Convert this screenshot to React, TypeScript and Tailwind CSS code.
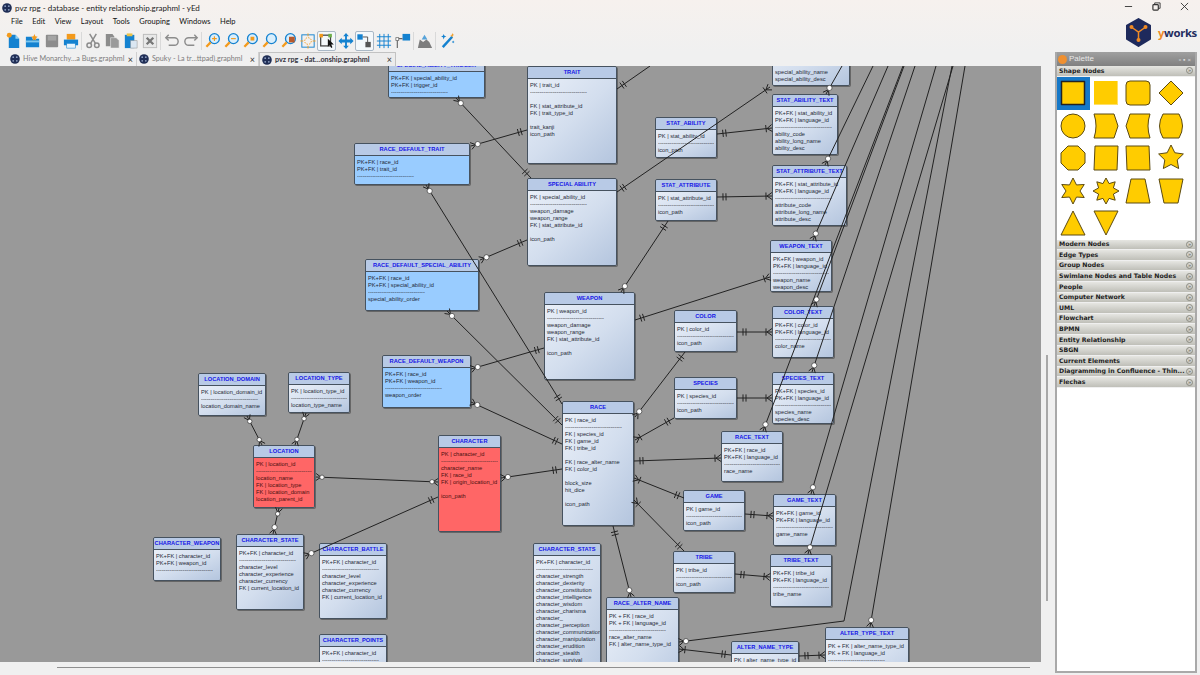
import React from "react";

type N = { t: string; x: number; y: number; r: number; b: number; c?: "b" | "r"; l: string[]; h?: number };
const D = "-";
const nodes: N[] = [
  { t: "SPECIAL_ABILITY_TRIGGER", x: 388, y: 59, r: 485, b: 98, c: "b", l: ["PK+FK | special_ability_id", "PK+FK | trigger_id", D] },
  { t: "TRAIT", x: 527, y: 66, r: 617, b: 164, l: ["PK | trait_id", D, "", "FK | stat_attribute_id", "FK | trait_type_id", "", "trait_kanji", "icon_path"] },
  { t: "SPECIAL ABILITY", x: 527, y: 178, r: 617, b: 266, l: ["PK | special_ability_id", D, "weapon_damage", "weapon_range", "FK | stat_attribute_id", "", "icon_path"] },
  { t: "RACE_DEFAULT_TRAIT", x: 354, y: 143, r: 470, b: 185, c: "b", l: ["PK+FK | race_id", "PK+FK | trait_id", D] },
  { t: "RACE_DEFAULT_SPECIAL_ABILITY", x: 365, y: 259, r: 479, b: 311, c: "b", l: ["PK+FK | race_id", "PK+FK | special_ability_id", D, "special_ability_order"] },
  { t: "STAT_ABILITY", x: 655, y: 117, r: 717, b: 158, l: ["PK | stat_ability_id", D, "icon_path"] },
  { t: "STAT_ATTRIBUTE", x: 655, y: 179, r: 717, b: 221, l: ["PK | stat_attribute_id", D, "icon_path"] },
  { t: "SPECIAL_ABILITY_TEXT", x: 772, y: 25, r: 850, b: 86, l: ["PK+FK | special_ability_id", "PK+FK | language_id", D, "", "special_ability_name", "special_ability_desc"] },
  { t: "STAT_ABILITY_TEXT", x: 772, y: 94, r: 838, b: 155, l: ["PK+FK | stat_ability_id", "PK+FK | language_id", D, "ability_code", "ability_long_name", "ability_desc"] },
  { t: "STAT_ATTRIBUTE_TEXT", x: 772, y: 165, r: 847, b: 226, l: ["PK+FK | stat_attribute_id", "PK+FK | language_id", D, "attribute_code", "attribute_long_name", "attribute_desc"] },
  { t: "WEAPON_TEXT", x: 770, y: 240, r: 832, b: 292, l: ["PK+FK | weapon_id", "PK+FK | language_id", D, "weapon_name", "weapon_desc"] },
  { t: "WEAPON", x: 544, y: 292, r: 635, b: 380, l: ["PK | weapon_id", D, "weapon_damage", "weapon_range", "FK | stat_attribute_id", "", "icon_path"] },
  { t: "COLOR", x: 674, y: 310, r: 737, b: 352, l: ["PK | color_id", D, "icon_path"] },
  { t: "COLOR_TEXT", x: 772, y: 306, r: 834, b: 358, l: ["PK+FK | color_id", "PK+FK | language_id", D, "color_name"] },
  { t: "SPECIES", x: 674, y: 377, r: 737, b: 419, l: ["PK | species_id", D, "icon_path"] },
  { t: "SPECIES_TEXT", x: 772, y: 372, r: 834, b: 424, l: ["PK+FK | species_id", "PK+FK | language_id", D, "species_name", "species_desc"] },
  { t: "RACE", x: 562, y: 401, r: 634, b: 526, l: ["PK | race_id", D, "FK | species_id", "FK | game_id", "FK | tribe_id", "", "FK | race_alter_name", "FK | color_id", "", "block_size", "hit_dice", "", "icon_path"] },
  { t: "RACE_TEXT", x: 721, y: 431, r: 783, b: 482, l: ["PK+FK | race_id", "PK+FK | language_id", D, "race_name"] },
  { t: "GAME", x: 683, y: 490, r: 745, b: 531, l: ["PK | game_id", D, "icon_path"] },
  { t: "GAME_TEXT", x: 773, y: 494, r: 836, b: 546, l: ["PK+FK | game_id", "PK+FK | language_id", D, "game_name"] },
  { t: "TRIBE", x: 673, y: 551, r: 735, b: 593, l: ["PK | tribe_id", D, "icon_path"] },
  { t: "TRIBE_TEXT", x: 770, y: 554, r: 832, b: 607, l: ["PK+FK | tribe_id", "PK+FK | language_id", D, "tribe_name"] },
  { t: "CHARACTER_STATS", x: 533, y: 543, r: 601, b: 700, l: ["PK+FK | character_id", D, "character_strength", "character_dexterity", "character_constitution", "character_intelligence", "character_wisdom", "character_charisma", "character_", "character_perception", "character_communication", "character_manipulation", "character_erudition", "character_stealth", "character_survival"] },
  { t: "RACE_ALTER_NAME", x: 606, y: 597, r: 679, b: 700, l: ["PK + FK | race_id", "PK + FK | language_id", D, "race_alter_name", "FK | alter_name_type_id"] },
  { t: "ALTER_NAME_TYPE", x: 731, y: 641, r: 799, b: 700, l: ["PK | alter_name_type_id"] },
  { t: "ALTER_TYPE_TEXT", x: 825, y: 627, r: 909, b: 700, l: ["PK + FK | alter_name_type_id", "PK + FK | language_id", D] },
  { t: "LOCATION_DOMAIN", x: 198, y: 373, r: 266, b: 416, l: ["PK | location_domain_id", D, "location_domain_name"] },
  { t: "LOCATION_TYPE", x: 288, y: 372, r: 350, b: 413, l: ["PK | location_type_id", D, "location_type_name"] },
  { t: "LOCATION", x: 253, y: 445, r: 315, b: 508, c: "r", l: ["PK | location_id", D, "location_name", "FK | location_type", "FK | location_domain", "location_parent_id"] },
  { t: "CHARACTER", x: 438, y: 435, r: 501, b: 532, c: "r", l: ["PK | character_id", D, "character_name", "FK | race_id", "FK | origin_location_id", "", "icon_path"] },
  { t: "RACE_DEFAULT_WEAPON", x: 382, y: 355, r: 471, b: 408, c: "b", l: ["PK+FK | race_id", "PK+FK | weapon_id", D, "weapon_order"] },
  { t: "CHARACTER_WEAPON", x: 153, y: 537, r: 221, b: 581, l: ["PK+FK | character_id", "PK+FK | weapon_id", D] },
  { t: "CHARACTER_STATE", x: 236, y: 534, r: 304, b: 610, l: ["PK+FK | character_id", D, "character_level", "character_experience", "character_currency", "FK | current_location_id"] },
  { t: "CHARACTER_BATTLE", x: 319, y: 543, r: 387, b: 619, l: ["PK+FK | character_id", D, "character_level", "character_experience", "character_currency", "FK | current_location_id"] },
  { t: "CHARACTER_POINTS", x: 319, y: 634, r: 387, b: 700, l: ["PK+FK | character_id", D] },
];

type Deco = "d" | "c" | "k" | "o" | "";
type E = { p: number[][]; a: Deco; z: Deco };
const edges: E[] = [
  { p: [[456, 98], [531, 178]], a: "c", z: "d" },
  { p: [[471, 146], [527, 130]], a: "c", z: "d" },
  { p: [[426, 185], [562, 404]], a: "c", z: "d" },
  { p: [[480, 260], [527, 240]], a: "c", z: "d" },
  { p: [[447, 311], [562, 425]], a: "c", z: "d" },
  { p: [[471, 369], [544, 348]], a: "c", z: "d" },
  { p: [[471, 402], [562, 444]], a: "c", z: "d" },
  { p: [[501, 478], [562, 469]], a: "c", z: "d" },
  { p: [[316, 477], [438, 482]], a: "o", z: "o" },
  { p: [[438, 497], [305, 556]], a: "d", z: "c" },
  { p: [[247, 416], [262, 445]], a: "o", z: "o" },
  { p: [[306, 413], [295, 445]], a: "o", z: "o" },
  { p: [[279, 508], [273, 534]], a: "o", z: "c" },
  { p: [[668, 221], [621, 292]], a: "d", z: "c" },
  { p: [[635, 320], [770, 277]], a: "d", z: "k" },
  { p: [[635, 417], [685, 352]], a: "c", z: "d" },
  { p: [[635, 440], [674, 418]], a: "k", z: "d" },
  { p: [[634, 461], [721, 458]], a: "d", z: "k" },
  { p: [[634, 478], [684, 498]], a: "k", z: "d" },
  { p: [[634, 500], [684, 551]], a: "k", z: "d" },
  { p: [[613, 526], [631, 597]], a: "d", z: "c" },
  { p: [[679, 642], [844, 621], [952, 66]], a: "c", z: "" },
  { p: [[679, 649], [731, 655]], a: "k", z: "d" },
  { p: [[799, 656], [825, 655]], a: "d", z: "k" },
  { p: [[737, 332], [772, 332]], a: "d", z: "k" },
  { p: [[737, 398], [772, 398]], a: "d", z: "k" },
  { p: [[745, 514], [773, 516]], a: "d", z: "k" },
  { p: [[735, 574], [770, 577]], a: "d", z: "k" },
  { p: [[717, 134], [772, 128]], a: "d", z: "k" },
  { p: [[717, 197], [772, 196]], a: "d", z: "k" },
  { p: [[617, 89], [650, 66]], a: "d", z: "" },
  { p: [[617, 192], [770, 87]], a: "d", z: "k" },
  { p: [[826, 94], [842, 66]], a: "c", z: "" },
  { p: [[825, 165], [873, 66]], a: "c", z: "" },
  { p: [[813, 240], [888, 66]], a: "c", z: "" },
  { p: [[814, 306], [904, 66]], a: "c", z: "" },
  { p: [[812, 372], [915, 66]], a: "c", z: "" },
  { p: [[763, 431], [903, 66]], a: "c", z: "" },
  { p: [[811, 494], [936, 66]], a: "c", z: "" },
  { p: [[808, 554], [953, 66]], a: "c", z: "" },
  { p: [[870, 627], [965, 66]], a: "c", z: "" },
];

function Decor({ from, to, kind }: { from: number[]; to: number[]; kind: Deco }) {
  if (!kind) return null;
  const dx = to[0] - from[0];
  const dy = to[1] - from[1];
  const len = Math.hypot(dx, dy);
  const u = [dx / len, dy / len];
  const n = [-u[1], u[0]];
  const at = (d: number, s = 0) => [from[0] + u[0] * d + n[0] * s, from[1] + u[1] * d + n[1] * s];
  const tick = (d: number, key: string) => {
    const a = at(d, 3.6);
    const b = at(d, -3.6);
    return <line key={key} x1={a[0]} y1={a[1]} x2={b[0]} y2={b[1]} />;
  };
  const crow = (key: string) => {
    const a = at(0, 3.5);
    const b = at(0, -3.5);
    const c = at(5);
    return <polyline key={key} points={`${a[0]},${a[1]} ${c[0]},${c[1]} ${b[0]},${b[1]}`} fill="none" />;
  };
  if (kind === "d") return <g>{tick(6, "a")}{tick(9, "b")}</g>;
  if (kind === "k") return <g>{crow("a")}{tick(6, "b")}</g>;
  const c = at(kind === "c" ? 7 : 6);
  return (
    <g>
      {crow("a")}
      <circle cx={c[0]} cy={c[1]} r={kind === "c" ? 2.6 : 2.2} fill="#fff" stroke="#333" strokeWidth={0.7} />
    </g>
  );
}

function ErNode({ n }: { n: N }) {
  const body =
    n.c === "b"
      ? "bg-[#99ccff]"
      : n.c === "r"
      ? "bg-[#ff6666]"
      : "bg-gradient-to-br from-[#e9eff8] via-[#d3deee] to-[#b4c5de]";
  const txt = n.c === "r" ? "text-[#4a1010]" : "text-[#1f2a36]";
  return (
    <div
      className="absolute flex flex-col overflow-hidden rounded-[2px] border border-[#46525f] shadow-[1px_1px_0_#666]"
      style={{ left: n.x, top: n.y - 66, width: n.r - n.x, height: n.b - n.y }}
    >
      <div className="flex h-[12px] shrink-0 items-center justify-center border-b border-[#46525f] bg-[#b8cae6] text-[5.7px] font-bold whitespace-nowrap text-[#1414e6]">
        {n.t}
      </div>
      <div className={`flex-1 px-[2px] pt-[3px] text-[5.7px] leading-[7px] ${body} ${txt}`}>
        {n.l.map((s, i) =>
          s === D ? (
            <div key={i} className="h-[7px] overflow-hidden whitespace-nowrap text-[#222]">
              ------------------------------
            </div>
          ) : (
            <div key={i} className="h-[7px] whitespace-nowrap">
              {s}
            </div>
          )
        )}
      </div>
    </div>
  );
}

function Canvas() {
  return (
    <div className="relative h-[596px] w-[1041px] shrink-0 overflow-hidden bg-[#999999] font-['Liberation_Sans',sans-serif]">
      {nodes.map((n) => (
        <ErNode key={n.t} n={n} />
      ))}
      <svg className="pointer-events-none absolute inset-0" width={1041} height={596} viewBox="0 66 1041 596">
        <g stroke="#222" strokeWidth={1} fill="none">
          {edges.map((e, i) => (
            <g key={i}>
              <polyline points={e.p.map((q) => q.join(",")).join(" ")} />
              <Decor from={e.p[0]} to={e.p[1]} kind={e.a} />
              <Decor from={e.p[e.p.length - 1]} to={e.p[e.p.length - 2]} kind={e.z} />
            </g>
          ))}
        </g>
      </svg>
    </div>
  );
}

const B = "#1482d0";
const O = "#f39a1c";
const G = "#8c8c8c";

function Ic({ i }: { i: number }) {
  const mag = (inner: React.ReactNode) => (
    <g>
      <circle cx="11" cy="7" r="5.2" fill="#d8eefc" stroke={B} strokeWidth="1.4" />
      <line x1="7" y1="11" x2="2.5" y2="15.5" stroke={O} strokeWidth="2.4" />
      {inner}
    </g>
  );
  const icons: React.ReactNode[] = [
    <g><path d="M4 3h7l4 4v10H4z" fill={B} /><path d="M11 3l4 4h-4z" fill="#8fd0f5" /><circle cx="4.5" cy="3.5" r="2.6" fill={O} /></g>,
    <g><path d="M2 5h6l1 2h7v9H2z" fill={B} /><path d="M2 9h14v2H2z" fill="#7cc6ee" /><path d="M11 2l1 2.5 2.5.5-2 1.5.5 2.5-2-1.2-2 1.2.5-2.5-2-1.5 2.5-.5z" fill={O} /></g>,
    <g><rect x="3" y="3" width="13" height="13" rx="1" fill={G} /><rect x="5" y="4" width="9" height="5" fill="#a5a5a5" /></g>,
    <g><rect x="5" y="2" width="9" height="6" fill={O} /><path d="M2 8h15v6H2z" fill={B} /><rect x="5" y="12" width="9" height="5" fill="#e8f4fc" stroke={B} strokeWidth=".6" /></g>,
    <g fill="none" stroke={G} strokeWidth="1.6"><line x1="6" y1="2" x2="12" y2="12" /><line x1="13" y1="2" x2="7" y2="12" /><circle cx="5.5" cy="14" r="2.4" /><circle cx="13.5" cy="14" r="2.4" /></g>,
    <g><path d="M3 2h7l2 3v10H3z" fill={G} /><path d="M8 6h6l3 3v8H8z" fill="#9a9a9a" stroke="#eee" strokeWidth=".6" /></g>,
    <g><rect x="3" y="3" width="10" height="14" fill={B} /><rect x="5" y="1.5" width="6" height="3" fill="#e8c24a" /><path d="M9 9h7v8H9z" fill="#dbe7f2" stroke={G} strokeWidth=".5" /></g>,
    <g><rect x="2.5" y="2.5" width="14" height="14" fill="#e8e8e8" stroke="#bbb" /><path d="M6 6l7 7M13 6l-7 7" stroke="#777" strokeWidth="2.4" /></g>,
    <g fill="none" stroke={G} strokeWidth="1.5"><path d="M6 3L3 6l3 3" /><path d="M3 6h9a4 4 0 0 1 0 8H6" /></g>,
    <g fill="none" stroke={G} strokeWidth="1.5"><path d="M13 3l3 3-3 3" /><path d="M16 6H7a4 4 0 0 0 0 8h6" /></g>,
    mag(<path d="M11 4.5v5M8.5 7h5" stroke={O} strokeWidth="1.2" />),
    mag(<path d="M8.5 7h5" stroke={O} strokeWidth="1.2" />),
    mag(<rect x="9" y="5" width="4" height="4" fill={O} />),
    mag(null),
    mag(<rect x="9.5" y="5" width="6" height="6" fill="#b85a2c" />),
    <g><rect x="3" y="3" width="13" height="13" fill="none" stroke={B} strokeWidth="1" /><circle cx="9.5" cy="9.5" r="3.5" fill="none" stroke={O} strokeDasharray="1.5 1.2" /><path d="M9.5 1.5v3M9.5 14.5v3M1.5 9.5h3M14.5 9.5h3" stroke={O} strokeWidth="1" /></g>,
    <g><rect x="3" y="3" width="11" height="12" fill="none" stroke="#444" strokeWidth="1.4" /><rect x="1.5" y="1.5" width="4" height="4" fill={O} /><rect x="11.5" y="1.5" width="4" height="4" fill="#6fb04a" /><path d="M11 7v9l2.2-2 1.5 3.2 1.4-.7-1.4-3h3z" fill="#111" /></g>,
    <g fill={B}><path d="M9.5 1l3 3.5h-2v3.5h3.5v-2l3.5 3.5-3.5 3.5v-2h-3.5v3.5h2l-3 3.5-3-3.5h2v-3.5H5v2L1.5 9.5 5 6v2h3.5V4.5h-2z" /></g>,
    <g><rect x="1.5" y="2" width="6" height="6" fill={B} /><path d="M7.5 5H13v6" fill="none" stroke="#555" strokeWidth="1.1" /><rect x="10.5" y="10.5" width="6" height="6" fill="#555" /></g>,
    <g stroke={B} strokeWidth="1"><path d="M5 2v15M9.5 2v15M14 2v15M2 5h15M2 9.5h15M2 14h15" /></g>,
    <g><rect x="9" y="2" width="8" height="7" fill={B} /><path d="M9 7H3.5v10" fill="none" stroke="#666" strokeWidth="1.2" /><rect x="2" y="6" width="3" height="3" fill="#fff" stroke="#666" strokeWidth=".8" /></g>,
    <g fill="#7d7d7d"><path d="M2 17l2-9 3.5 2.5L11 8l3 2.5L17 17z" /><path d="M6 8l3-5 3 5z" fill={B} opacity=".7" /></g>,
    <g><path d="M5 16L15 5" stroke={B} strokeWidth="2.6" /><path d="M6 2l.8 2 2 .8-2 .8L6 8l-.8-2.4-2-.8 2-.8z" fill={B} /><path d="M15 1l.6 1.5 1.5.6-1.5.6L15 6l-.6-1.4-1.5-.6 1.5-.6z" fill={O} /><path d="M16 9l.5 1 1 .5-1 .5-.5 1-.5-1-1-.5 1-.5z" fill={B} /></g>,
  ];
  return (
    <svg width="18" height="18" viewBox="0 0 19 19">
      {icons[i]}
    </svg>
  );
}

function Toolbar() {
  const groups = [[0, 1, 2, 3], [4, 5, 6, 7], [8, 9], [10, 11, 12, 13, 14, 15, 16, 17, 18, 19, 20], [21], [22]];
  return (
    <div className="flex h-[23px] items-center pl-[4px]">
      {groups.map((g, gi) => (
        <React.Fragment key={gi}>
          {gi > 0 && (
            <div className="flex h-[18px] w-[3px] justify-center">
              <div className="w-px bg-[#d9d9d9]" />
            </div>
          )}
          {g.map((i) => (
            <div
              key={i}
              className={
                i === 16 || i === 18
                  ? "flex h-[20px] w-[19px] items-center justify-center rounded-[2px] border border-[#aab8c6] bg-[#f4f8fb]"
                  : "flex h-[20px] w-[19px] items-center justify-center"
              }
            >
              <Ic i={i} />
            </div>
          ))}
        </React.Fragment>
      ))}
    </div>
  );
}

function YedIcon({ size }: { size: number }) {
  return (
    <svg width={size} height={size} viewBox="0 0 10 10" className="shrink-0">
      <circle cx="5" cy="5" r="4.8" fill="#1f2d55" />
      <circle cx="3.2" cy="3.2" r=".9" fill="#8d9ec0" />
      <circle cx="6.8" cy="3.2" r=".9" fill="#8d9ec0" />
      <circle cx="3.2" cy="6.8" r=".9" fill="#8d9ec0" />
      <circle cx="6.8" cy="6.8" r=".9" fill="#8d9ec0" />
    </svg>
  );
}

function Tab({ label, w, active }: { label: string; w: string; active?: boolean }) {
  return (
    <div
      className={`flex h-[14px] items-center gap-[3px] pl-[2px] ${w} ${
        active ? "rounded-t-[1px] border border-b-0 border-[#c2c2c2] bg-[#ececec] font-bold text-[#33333d]" : "border-r border-[#cfcfcf] text-[#7d7d7d]"
      }`}
    >
      <YedIcon size={10} />
      <span className="flex-1 text-[7.2px] leading-none whitespace-nowrap">{label}</span>
      <span className="mr-[3px] text-[9px] leading-none font-normal text-[#333]">×</span>
    </div>
  );
}

const S = { fill: "#ffcc00", stroke: "#5b4a12", strokeWidth: 1, strokeLinejoin: "round" as const };
function star(n: number, R: number, r: number) {
  const pts: string[] = [];
  for (let i = 0; i < n * 2; i++) {
    const a = (Math.PI * i) / n - Math.PI / 2;
    const q = i % 2 ? r : R;
    pts.push(`${16 + q * Math.cos(a)},${16 + q * Math.sin(a)}`);
  }
  return pts.join(" ");
}
const shapes: React.ReactNode[] = [
  <rect x="4.5" y="4.5" width="23" height="23" {...S} strokeWidth={1.5} stroke="#222" />,
  <g><rect x="4" y="4" width="24" height="24" fill="#ffe066" /><rect x="4" y="4" width="23" height="23" fill="#ffcc00" /></g>,
  <rect x="4" y="4" width="24" height="24" rx="4" {...S} />,
  <polygon points="16,4 28,16 16,28 4,16" {...S} />,
  <circle cx="16" cy="16" r="12" {...S} />,
  <path d="M4 4H24L28 16L24 28H4Q8 16 4 4Z" {...S} />,
  <path d="M8 4H28Q24 16 28 28H8L4 16Z" {...S} />,
  <path d="M8 4H24Q31 16 24 28H8Q1 16 8 4Z" {...S} />,
  <polygon points="11,4 21,4 28,11 28,21 21,28 11,28 4,21 4,11" {...S} />,
  <polygon points="5,4 28,4 27,28 4,28" {...S} />,
  <polygon points="4,4 27,4 28,28 5,28" {...S} />,
  <polygon points={star(5, 13, 6.5)} {...S} />,
  <polygon points={star(6, 13, 7)} {...S} />,
  <polygon points={star(8, 13, 8)} {...S} />,
  <polygon points="9,4 23,4 28,28 4,28" {...S} />,
  <polygon points="4,4 28,4 23,28 9,28" {...S} />,
  <polygon points="16,4 28,28 4,28" {...S} />,
  <polygon points="4,4 28,4 16,28" {...S} />,
];

const sections = [
  "Modern Nodes", "Edge Types", "Group Nodes", "Swimlane Nodes and Table Nodes", "People", "Computer Network", "UML",
  "Flowchart", "BPMN", "Entity Relationship", "SBGN", "Current Elements", "Diagramming in Confluence - Thin...", "Flechas",
];

function Section({ label }: { label: string }) {
  return (
    <div className="flex h-[10.6px] shrink-0 items-center justify-between border-b border-[#efefef] bg-gradient-to-b from-[#e6e6e2] to-[#bfbfb8] px-[2px] font-['DejaVu_Sans',sans-serif] text-[6.2px] leading-none font-bold whitespace-nowrap text-[#1e1e1e]">
      <span>{label}</span>
      <span className="flex h-[7px] w-[7px] items-center justify-center rounded-full border border-[#8a8a80] text-[5px] text-[#77776e]">»</span>
    </div>
  );
}

function Palette() {
  return (
    <div className="flex h-[621px] w-[142px] flex-col border-2 border-t-0 border-[#a9a9a9] bg-white">
      <div className="flex h-[14px] shrink-0 items-center gap-[2px] bg-gradient-to-b from-[#a0a0a0] to-[#808080] pl-[1px] text-[8px] text-[#e8e8e8]">
        <span className="h-[9px] w-[9px] rounded-full bg-[#f09030]" />
        <span className="flex-1 font-['Liberation_Sans',sans-serif]">Palette</span>
        <span className="pr-[2px] text-[6px] tracking-[2px] text-[#e0e0e0]">▫▪×</span>
      </div>
      <Section label="Shape Nodes" />
      <div className="grid h-[163px] shrink-0 grid-cols-[repeat(4,32.5px)] auto-rows-[32.5px] pt-[0.5px]">
        {shapes.map((s, i) => (
          <div key={i} className={i === 0 ? "bg-[#1678c8]" : ""}>
            <svg width="32" height="32" viewBox="0 0 32 32">
              {s}
            </svg>
          </div>
        ))}
      </div>
      {sections.map((s) => (
        <Section key={s} label={s} />
      ))}
    </div>
  );
}

export default function App() {
  return (
    <div className="flex h-[675px] w-[1200px] flex-col overflow-hidden bg-[#f0f0f0] font-['Lato',sans-serif] text-black">
      <div className="flex h-[52px] shrink-0 bg-gradient-to-b from-[#f6f1ee] to-[#f0f0f0]">
        <div className="flex-1">
          <div className="flex h-[15px] items-center gap-[3px] pl-[2px] text-[8px] text-[#222]">
            <YedIcon size={10} />
            <span>pvz rpg - database - entity relationship.graphml - yEd</span>
          </div>
          <div className="flex h-[14px] items-center gap-[9.5px] pl-[11px] text-[7.5px] text-[#111]">
            {["File", "Edit", "View", "Layout", "Tools", "Grouping", "Windows", "Help"].map((m) => (
              <span key={m}>{m}</span>
            ))}
          </div>
          <Toolbar />
        </div>
        <div className="flex w-[80px] flex-col items-end">
          <div className="flex h-[18px] items-start gap-[19px] pt-[2px] pr-[11px] text-[#333]">
            <svg width="9" height="9" viewBox="0 0 10 10"><line x1="1" y1="5" x2="9" y2="5" stroke="#333" /></svg>
            <svg width="9" height="9" viewBox="0 0 10 10"><rect x="1" y="3" width="6" height="6" rx="1" fill="none" stroke="#333" strokeWidth="1.3" /><path d="M3 3V1h6v6H7" fill="none" stroke="#333" /></svg>
            <svg width="9" height="9" viewBox="0 0 10 10"><path d="M1 1l8 8M9 1l-8 8" stroke="#333" /></svg>
          </div>
          <div className="flex items-center gap-[6px] pr-[3px]">
            <svg width="27" height="29" viewBox="0 0 27 29">
              <path d="M13.5 1L25 7.5V21L13.5 28L2 21V7.5Z" fill="#1e2a5c" stroke="#1e2a5c" strokeWidth="2" strokeLinejoin="round" />
              <path d="M7 9.5L13.5 14L20 9.5M13.5 14V22" fill="none" stroke="#ef8a25" strokeWidth="1.5" />
              <circle cx="6.5" cy="9" r="2" fill="#ef8a25" />
              <circle cx="20.5" cy="9" r="2" fill="#ef8a25" />
              <circle cx="13.5" cy="22" r="2" fill="#ef8a25" />
            </svg>
            <span className="font-['Noto_Sans',sans-serif] text-[11.3px] leading-none font-bold tracking-[-0.3px] text-[#232d5e]">
              <span className="text-[#ef8a25]">y</span>works
            </span>
          </div>
        </div>
      </div>

      <div className="flex flex-1">
        <div className="flex w-[1055px] flex-col">
          <div className="flex h-[14px] shrink-0 items-end pl-[8px]">
            <Tab label="Hive Monarchy…a Bugs.graphml" w="w-[129px]" />
            <Tab label="Spuky - La tr…ttpad).graphml" w="w-[122px]" />
            <Tab label="pvz rpg - dat…onship.graphml" w="w-[137px]" active />
          </div>
          <div className="flex h-[596px] shrink-0">
            <Canvas />
            <div className="flex w-[14px] flex-col pt-[289px] pl-[5px]">
              <div className="h-[246px] w-[2px] bg-[#a8a8a8]" />
            </div>
          </div>
          <div className="pt-[5px] pl-[57px]">
            <div className="h-px w-[973px] bg-[#8f8f8f]" />
          </div>
        </div>
        <Palette />
      </div>
    </div>
  );
}
